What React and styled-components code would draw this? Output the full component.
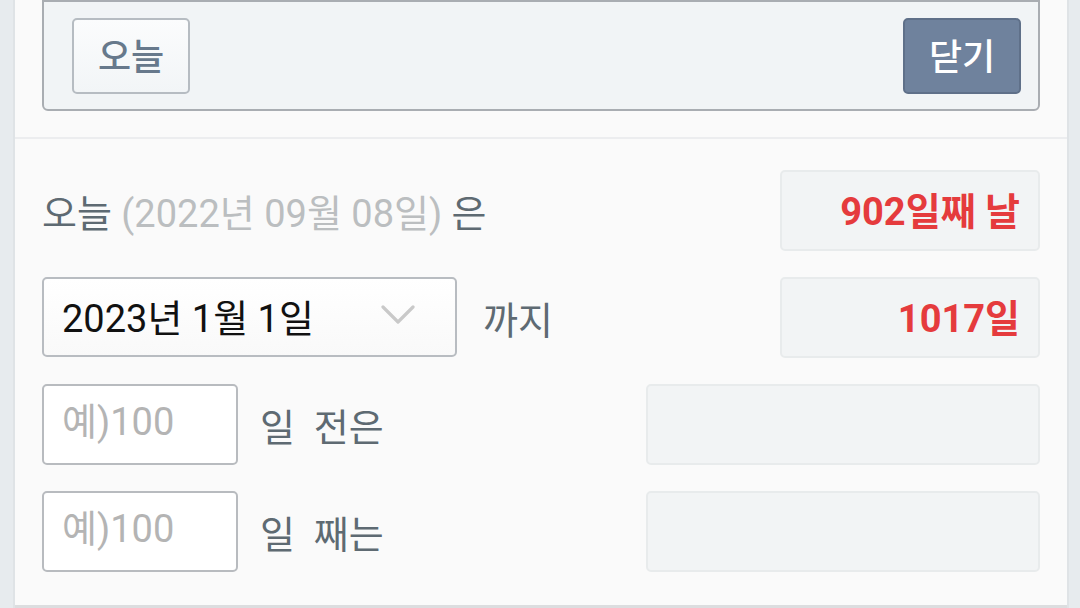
import React from "react";
import styled, { createGlobalStyle } from "styled-components";

const Global = createGlobalStyle`
  html, body { margin: 0; padding: 0; background: #fafafa; }
  body { font-family: Roboto, "Noto Sans CJK KR", sans-serif; overflow: hidden; }
  * { box-sizing: border-box; }
`;

const Page = styled.div`
  display: flex;
  width: 1080px;
  height: 608px;
  overflow: hidden;
  background: #fafafa;
`;

const SideStrip = styled.div`
  flex: 0 0 ${(p) => p.$w}px;
  background: #e7ebee;
  ${(p) => (p.$left ? "border-right: 2px solid #dfe3e6;" : "border-left: 2px solid #dfe3e6;")}
`;

const Main = styled.div`
  flex: 1;
  display: flex;
  flex-direction: column;
  background: #fafafa;
  border-bottom: 3px solid #dcdddf;
`;

const TopPanel = styled.div`
  margin: 0 27px;
  height: 111px;
  display: flex;
  justify-content: space-between;
  align-items: flex-start;
  padding: 16px 17px 0 28px;
  background: #f1f4f6;
  border: 2px solid #a9adb2;
  border-radius: 0 0 6px 6px;
`;

const PanelButton = styled.button`
  width: 118px;
  height: 76px;
  border-radius: 5px;
  font-family: inherit;
  font-size: 36px;
  font-weight: 500;
  cursor: pointer;
  display: flex;
  align-items: center;
  justify-content: center;
  padding: 0 0 4px;
  ${(p) =>
    p.$primary
      ? `background: #6f829d; border: 2px solid #5f7089; color: #ffffff;`
      : `background: linear-gradient(#fbfcfd, #f2f5f7); border: 2px solid #b6bcc2; color: #67798c;`}
`;

const Separator = styled.div`
  margin-top: 26px;
  height: 2px;
  background: #ecedef;
`;

const Rows = styled.div`
  display: flex;
  flex-direction: column;
  gap: 27px;
  padding: 31px 27px 0;
`;

const Row = styled.div`
  display: flex;
  align-items: center;
  height: 80px;
`;

const Label = styled.span`
  font-size: 38px;
  color: #5e6a72;
  white-space: pre;
  margin-left: ${(p) => p.$ml || 0}px;
`;

const Muted = styled.span`
  color: #bbbec0;
`;

const Result = styled.div`
  margin-left: auto;
  width: ${(p) => p.$w}px;
  height: 81px;
  background: #f2f4f5;
  border: 2px solid #e8ebec;
  border-radius: 5px;
  display: flex;
  align-items: center;
  justify-content: flex-end;
  padding: 0 18px 4px 0;
  color: #e53b3d;
  font-size: 38px;
  font-weight: 700;
`;

const Select = styled.div`
  width: 415px;
  height: 80px;
  background: linear-gradient(#ffffff, #f9f9f9);
  border: 2px solid #b8bcc1;
  border-radius: 5px;
  display: flex;
  align-items: center;
  padding: 0 40px 4px 18px;
  font-size: 38px;
  color: #111111;
`;

const Chevron = styled.svg`
  margin-left: auto;
  width: 34px;
  height: 22px;
`;

const Input = styled.input`
  width: 196px;
  height: 81px;
  background: #ffffff;
  border: 2px solid #b8bbbf;
  border-radius: 5px;
  padding: 0 0 4px 18px;
  font-family: inherit;
  font-size: 38px;
  color: #222;
  outline: none;
  &::placeholder { color: #b4b4b4; }
`;

export default function App() {
  return (
    <Page>
      <Global />
      <SideStrip $left $w={15} />
      <Main>
        <TopPanel>
          <PanelButton>오늘</PanelButton>
          <PanelButton $primary>닫기</PanelButton>
        </TopPanel>
        <Separator />
        <Rows>
          <Row>
            <Label>
              오늘 <Muted>(2022년 09월 08일)</Muted> 은
            </Label>
            <Result $w={260}>902일째 날</Result>
          </Row>
          <Row>
            <Select>
              2023년 1월 1일
              <Chevron viewBox="0 0 34 22" fill="none">
                <path d="M2 3 L17 18 L32 3" stroke="#c9c9c9" strokeWidth="3.2" strokeLinecap="round" strokeLinejoin="round" />
              </Chevron>
            </Select>
            <Label $ml={26}>까지</Label>
            <Result $w={260}>1017일</Result>
          </Row>
          <Row>
            <Input placeholder="예)100" />
            <Label $ml={22}>일  전은</Label>
            <Result $w={394} />
          </Row>
          <Row>
            <Input placeholder="예)100" />
            <Label $ml={22}>일  째는</Label>
            <Result $w={394} />
          </Row>
        </Rows>
      </Main>
      <SideStrip $w={13} />
    </Page>
  );
}
